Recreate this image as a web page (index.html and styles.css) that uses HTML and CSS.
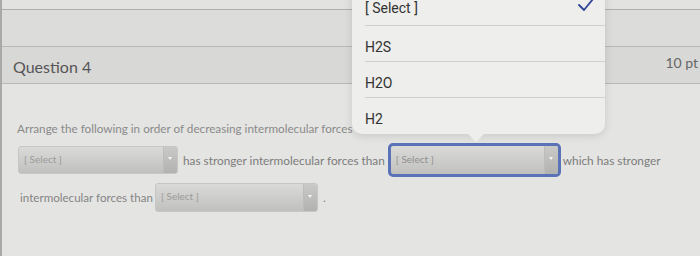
FILE: index.html
```html
<!DOCTYPE html>
<html lang="en">
<head>
  <meta charset="UTF-8" />
  <title>Question 4</title>
  <link rel="stylesheet" href="styles.css">
</head>
<body>

  <div class="page">
    <div class="top-strip"></div>
    <div class="gap-strip"></div>

    <div class="question-header">
      <span class="question-title">Question 4</span>
      <span class="question-points">10 pt</span>
    </div>

    <div class="question-body">
      <p class="prompt">Arrange the following in order of decreasing intermolecular forces</p>

      <div class="answer-row row-one">
        <div class="select-box box-one">
          <span class="select-label">[ Select ]</span>
          <span class="select-arrow"></span>
        </div>
        <span class="answer-text text-a">has stronger intermolecular forces than</span>
        <div class="select-box box-two focused">
          <span class="select-label">[ Select ]</span>
          <span class="select-arrow"></span>
        </div>
        <span class="answer-text text-b">which has stronger</span>
      </div>

      <div class="answer-row row-two">
        <span class="answer-text">intermolecular forces than</span>
        <div class="select-box box-three">
          <span class="select-label">[ Select ]</span>
          <span class="select-arrow"></span>
        </div>
        <span class="answer-text period">.</span>
      </div>
    </div>

    <!-- native picker popup open over the second dropdown -->
    <div class="picker">
      <div class="picker-item selected">
        <span>[ Select ]</span>
        <svg class="check" width="18" height="14" viewBox="0 0 18 14">
          <path d="M2 7 L7 12 L16 1" fill="none" stroke="#2f4496" stroke-width="1.8" stroke-linecap="round" stroke-linejoin="round"/>
        </svg>
      </div>
      <div class="picker-item">H2S</div>
      <div class="picker-item">H2O</div>
      <div class="picker-item last">H2</div>
      <span class="picker-pointer"></span>
    </div>
  </div>

</body>
</html>
```

FILE: styles.css
```css
:root {
  --bg: #e4e4e2;
  --band: #d8d8d6;
  --line: #b8b8b6;
  --text: #858585;
  --popup: #eeeeec;
}

* {
  box-sizing: border-box;
}

body {
  margin: 0;
  background: var(--bg);
  font-family: Lato, 'Liberation Sans', sans-serif;
  color: var(--text);
  overflow: hidden;
}

.page {
  position: relative;
  width: 700px;
  height: 256px;
  border-left: 2px solid #a9a9a7;
  overflow: hidden;
}

.top-strip {
  height: 10px;
  background: #e2e2e0;
  border-bottom: 1px solid #aeaeac;
}

.gap-strip {
  height: 37px;
  background: #dcdcda;
  border-bottom: 1px solid var(--line);
}

.question-header {
  height: 37px;
  background: var(--band);
  border-bottom: 1px solid var(--line);
  display: flex;
  justify-content: space-between;
  align-items: center;
  padding: 0 0 0 11px;
}

.question-title {
  font-size: 16px;
  color: #555;
  margin-top: 2px;
}

.question-points {
  font-size: 14px;
  color: #666;
  margin-right: 2px;
  margin-top: -5px;
}

.question-body {
  padding: 36px 0 0 15px;
}

.prompt {
  margin: 0;
  height: 16px;
  line-height: 16px;
  font-size: 11.7px;
  color: #8a8a8a;
  white-space: nowrap;
}

.answer-row {
  display: flex;
  align-items: center;
  font-size: 11.8px;
}

.row-one {
  margin-top: 7px;
  height: 34px;
  padding-left: 1px;
}

.row-two {
  margin-top: 6px;
  height: 29px;
  padding-left: 3px;
  font-size: 11.6px;
}

.answer-text {
  white-space: nowrap;
}

.text-a {
  margin: 0 3px 0 5px;
  color: #7c7c7c;
}

.text-b {
  margin-left: 2px;
  color: #7c7c7c;
}

.period {
  margin-left: 5px;
}

.select-box {
  display: flex;
  height: 28px;
  border: 1px solid #c6c6c4;
  border-radius: 3px;
  background: linear-gradient(#dadad8, #c0c0be);
  overflow: hidden;
}

.box-one {
  width: 160px;
}

.box-three {
  width: 163px;
  height: 29px;
  margin-left: 2px;
}

.box-two.focused {
  width: 173px;
  height: 34px;
  border: 3px solid #5a72b6;
  border-radius: 5px;
}

.select-label {
  flex: 1;
  font-size: 10px;
  line-height: 24px;
  padding-left: 5px;
  color: #9b9b9b;
}

.focused .select-label {
  line-height: 26px;
  color: #8f8f8f;
}

.select-arrow {
  position: relative;
  width: 14px;
  background: linear-gradient(#c9c9c7, #b2b2b0);
  border-left: 1px solid #bdbdbb;
}

.select-arrow::after {
  content: "";
  position: absolute;
  left: 4px;
  top: 40%;
  border-left: 2px solid transparent;
  border-right: 2px solid transparent;
  border-top: 3px solid #f6f6f6;
}

.picker {
  position: absolute;
  left: 350px;
  top: -10px;
  width: 253px;
  background: var(--popup);
  border-radius: 0 0 10px 10px;
  box-shadow: 0 2px 8px rgba(0, 0, 0, 0.12);
  font-family: Roboto, 'Liberation Sans', sans-serif;
  font-size: 14px;
  color: #333;
}

.picker-item {
  height: 36px;
  margin-left: 13px;
  padding: 6px 12px 0 0;
  border-bottom: 1px solid #d0d0ce;
  display: flex;
  align-items: center;
  justify-content: space-between;
}

.picker-item.selected {
  padding-top: 1px;
}

.picker-item.last {
  border-bottom: none;
}

.check {
  margin-bottom: 6px;
  margin-right: -2px;
}

.picker-pointer {
  position: absolute;
  left: 116px;
  bottom: -8px;
  border-left: 8px solid transparent;
  border-right: 8px solid transparent;
  border-top: 8px solid var(--popup);
}
```
